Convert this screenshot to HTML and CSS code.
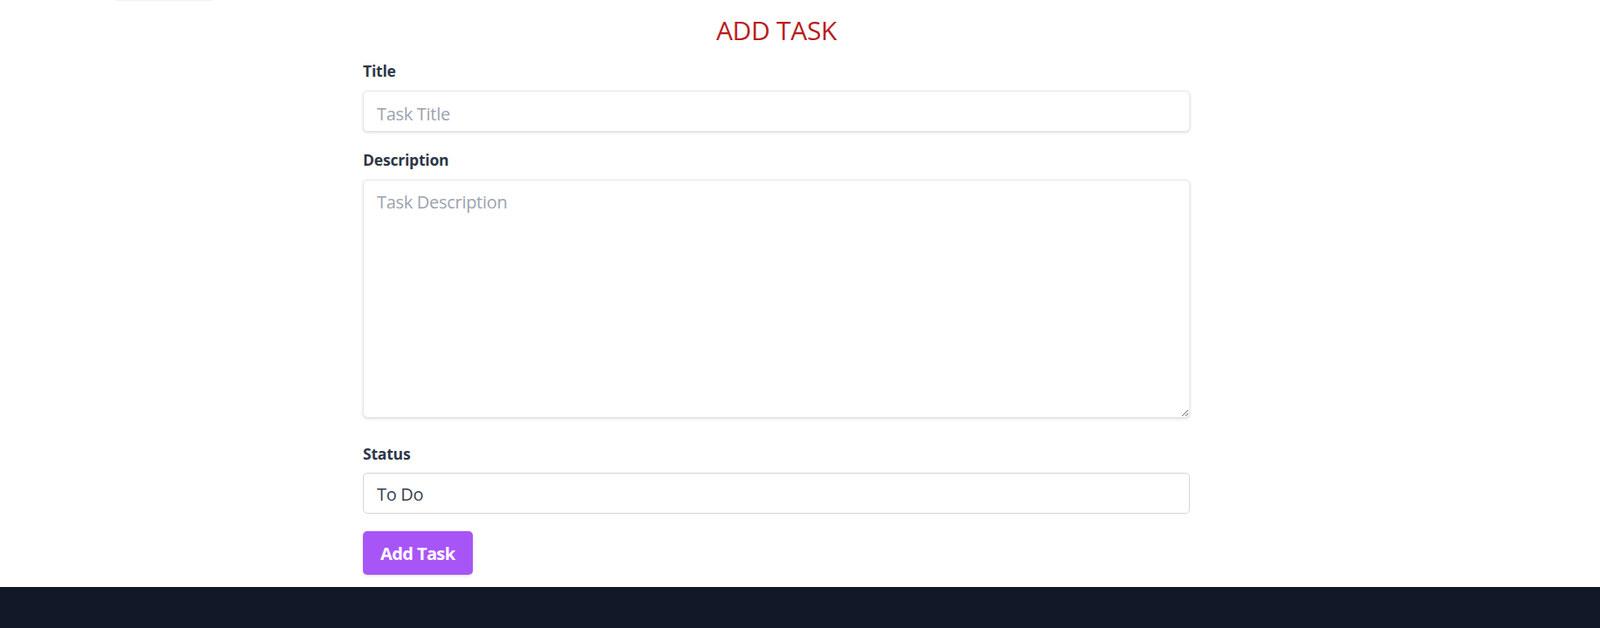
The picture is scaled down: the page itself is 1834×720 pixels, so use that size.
FILE: index.html
```html
<!DOCTYPE html>
<html>
<head>
	<meta charset="utf-8">
	<title>Add Task</title>
	<link rel="stylesheet" href="styles.css">
</head>
<body>
<div class="topbar">
	<div class="nav-edge"></div>
</div>
<div class="main">
	<div class="form-wrap">
		<h2 class="heading">ADD TASK</h2>
		<form class="task-form">
			<div class="field">
				<label for="title">Title</label>
				<input type="text" id="title" class="input" placeholder="Task Title">
			</div>
			<div class="field">
				<label for="desc">Description</label>
				<textarea id="desc" class="input textarea" placeholder="Task Description"></textarea>
			</div>
			<div class="field field-status">
				<label for="status">Status</label>
				<select id="status" class="select">
					<option>To Do</option>
					<option>In Progress</option>
					<option>Done</option>
				</select>
			</div>
			<button type="button" class="btn">Add Task</button>
		</form>
	</div>
</div>
<div class="footer"></div>
</body>
</html>
```

FILE: styles.css
```css
*{
	box-sizing: border-box;
}
html,body{
	margin: 0;
	padding: 0;
}
body{
	height: 720px;
	display: flex;
	flex-direction: column;
	background: #fff;
	font-family: "Open Sans", "Noto Sans", sans-serif;
	overflow: hidden;
}
.topbar{
	height: 2px;
	padding-left: 132px;
}
.nav-edge{
	width: 112px;
	height: 1px;
	background: #f2f2f2;
	border-radius: 0 0 4px 4px;
	box-shadow: 0 0 2px rgba(0,0,0,0.04);
}
.main{
	flex: 1;
}
.form-wrap{
	width: 948px;
	margin-left: 416px;
}
.heading{
	margin: 13px 0 0;
	font-size: 30px;
	line-height: 40px;
	font-weight: 400;
	letter-spacing: -0.3px;
	color: #b91c1c;
	text-align: center;
}
.task-form{
	margin-top: 14px;
}
.field{
	margin-bottom: 20px;
}
.field label{
	display: block;
	font-size: 17.5px;
	line-height: 25px;
	font-weight: 700;
	letter-spacing: -0.2px;
	color: #2d3748;
	margin-bottom: 10px;
}
.input{
	display: block;
	width: 100%;
	height: 47px;
	padding: 10px 15px 5px;
	font-family: inherit;
	font-size: 20px;
	line-height: 30px;
	letter-spacing: -0.3px;
	color: #374151;
	background: #fff;
	border: 1px solid #e5e7eb;
	border-radius: 5px;
	box-shadow: 0 1px 4px rgba(0,0,0,0.1), 0 1px 2px rgba(0,0,0,0.06);
	outline: none;
}
.input::placeholder{
	color: #9ca3af;
}
.textarea{
	height: 273px;
	resize: vertical;
}
.field-status{
	margin-top: 29px;
}
.field-status label{
	margin-bottom: 9px;
}
.select{
	display: block;
	width: 100%;
	height: 47px;
	padding: 9px 15px 6px;
	font-family: inherit;
	font-size: 20px;
	line-height: 30px;
	letter-spacing: -0.3px;
	color: #374151;
	background: #fff;
	border: 1px solid #d1d5db;
	border-radius: 5px;
	-webkit-appearance: none;
	appearance: none;
	outline: none;
}
.btn{
	display: block;
	height: 50px;
	padding: 0 20px;
	font-family: inherit;
	font-size: 20px;
	font-weight: 700;
	letter-spacing: -0.6px;
	white-space: nowrap;
	color: #fff;
	background: #a855f7;
	border: none;
	border-radius: 5px;
	box-shadow: 0 1px 4px rgba(0,0,0,0.1), 0 1px 2px rgba(0,0,0,0.06);
	cursor: pointer;
}
.footer{
	height: 47px;
	background: #111827;
}
```
